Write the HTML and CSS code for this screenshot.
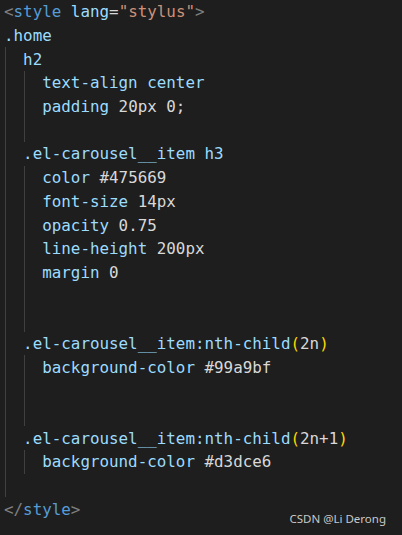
FILE: index.html
```html
<!DOCTYPE html>
<html>
<head>
<meta charset="utf-8">
<link rel="stylesheet" href="styles.css">
</head>
<body>
<div class="editor">
  <div class="line"><span class="p">&lt;</span><span class="tag">style </span><span class="attr">lang</span><span class="n">=</span><span class="str">"stylus"</span><span class="p">&gt;</span></div>
  <div class="line"><span class="id">.home</span></div>
  <div class="line"><span class="g"></span><span class="id">h2</span></div>
  <div class="line"><span class="g"></span><span class="g"></span><span class="id">text-align center</span></div>
  <div class="line"><span class="g"></span><span class="g"></span><span class="id">padding </span><span class="n">20px 0;</span></div>
  <div class="line"><span class="g"></span><span class="g"></span></div>
  <div class="line"><span class="g"></span><span class="id">.el-carousel__item h3</span></div>
  <div class="line"><span class="g"></span><span class="g"></span><span class="id">color </span><span class="n">#475669</span></div>
  <div class="line"><span class="g"></span><span class="g"></span><span class="id">font-size </span><span class="n">14px</span></div>
  <div class="line"><span class="g"></span><span class="g"></span><span class="id">opacity </span><span class="n">0.75</span></div>
  <div class="line"><span class="g"></span><span class="g"></span><span class="id">line-height </span><span class="n">200px</span></div>
  <div class="line"><span class="g"></span><span class="g"></span><span class="id">margin </span><span class="n">0</span></div>
  <div class="line"><span class="g"></span><span class="g"></span></div>
  <div class="line"><span class="g"></span><span class="g"></span></div>
  <div class="line"><span class="g"></span><span class="id">.el-carousel__item:nth-child</span><span class="br">(</span><span class="n">2n</span><span class="br">)</span></div>
  <div class="line"><span class="g"></span><span class="g"></span><span class="id">background-color </span><span class="n">#99a9bf</span></div>
  <div class="line"><span class="g"></span><span class="g"></span></div>
  <div class="line"><span class="g"></span><span class="g"></span></div>
  <div class="line"><span class="g"></span><span class="id">.el-carousel__item:nth-child</span><span class="br">(</span><span class="n">2n+1</span><span class="br">)</span></div>
  <div class="line"><span class="g"></span><span class="g"></span><span class="id">background-color </span><span class="n">#d3dce6</span></div>
  <div class="line"><span class="g"></span></div>
  <div class="line"><span class="p">&lt;/</span><span class="tag">style</span><span class="p">&gt;</span></div>
</div>
<div class="mark">CSDN @Li Derong</div>
</body>
</html>
```
FILE: styles.css
```css
html, body {
  margin: 0;
  padding: 0;
  background: #1e1e1e;
}
body {
  width: 402px;
  height: 535px;
  position: relative;
  overflow: hidden;
}
.editor {
  padding: 0 0 0 4px;
  font-family: "DejaVu Sans Mono", "Liberation Mono", monospace;
  font-size: 15.86px;
}
.line {
  display: flex;
  align-items: center;
  height: 23.7px;
  white-space: pre;
  color: #9cdcfe;
}
.line span {
  white-space: pre;
}
.g {
  align-self: stretch;
  flex: 0 0 2ch;
  width: 2ch;
  background: linear-gradient(to right, transparent 1px, #404040 1px, #404040 2px, transparent 2px);
}
.p { color: #808080; }
.tag { color: #569cd6; }
.attr { color: #9cdcfe; }
.str { color: #ce9178; }
.id { color: #9cdcfe; }
.n { color: #d8d8d8; }
.br { color: #ffd700; }
.mark {
  position: absolute;
  right: 16px;
  bottom: 9px;
  font-family: "Noto Sans", "Liberation Sans", sans-serif;
  font-size: 11.5px;
  color: #c8c8c8;
}
```
